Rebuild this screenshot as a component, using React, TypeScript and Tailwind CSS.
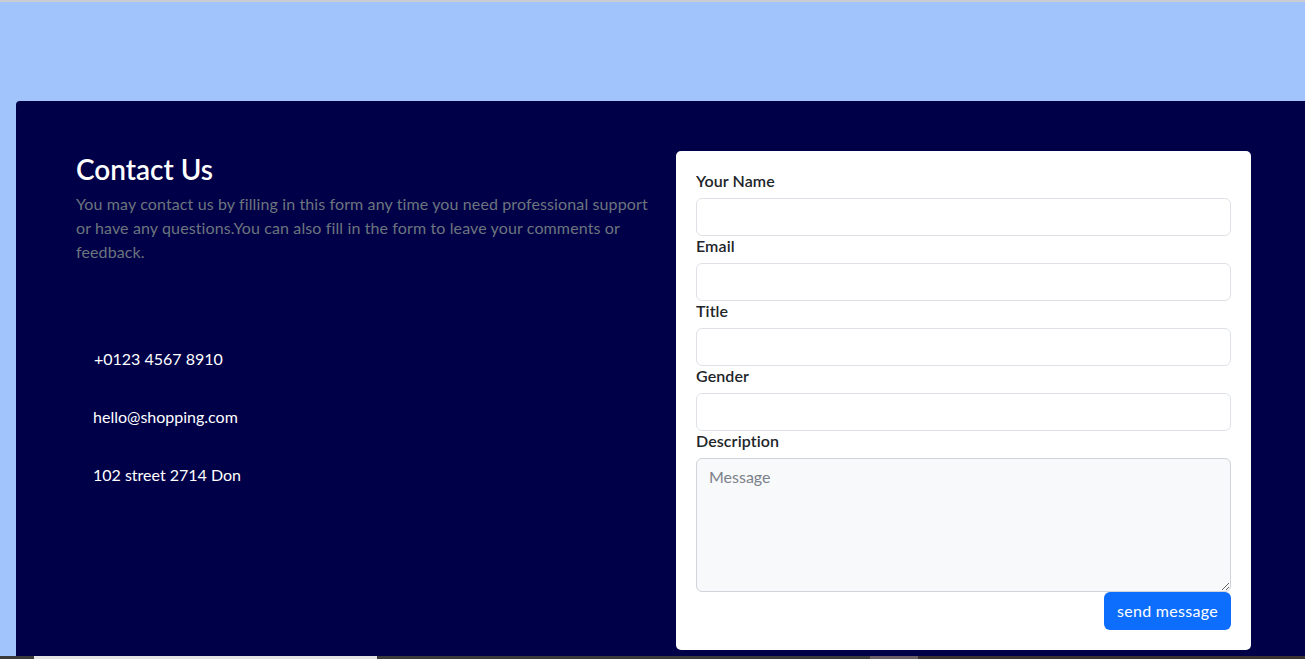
import React from "react";

export default function App() {
  const font = { fontFamily: '"Lato", "Noto Sans", sans-serif' };
  return (
    <div className="w-full h-[659px] overflow-hidden flex flex-col bg-[#a0c4fb]" style={font}>
      <div className="h-[2px] bg-[#c9cdd3] shrink-0" />
      <div className="h-[99px] shrink-0" />
      <div className="ml-[16px] w-[1320px] h-[555px] shrink-0 bg-[#000048] rounded-tl-[4px] flex pl-[60px] pt-[50px] gap-[20px]">
        <div className="w-[580px] flex flex-col">
          <h3 className="text-[28px] font-semibold text-white leading-[34px] mt-[1px]">Contact Us</h3>
          <p className="text-[#6c757d] text-[16px] leading-[24px] mt-[6px] tracking-[0.12px]">
            You may contact us by filling in this form any time you need professional support or have any questions.You can also fill in the form to leave your comments or feedback.
          </p>
          <div className="mt-[83px] flex flex-col gap-[34px] text-white text-[16px] leading-[24px]">
            <div className="pl-[18px]">+0123 4567 8910</div>
            <div className="pl-[17px]">hello@shopping.com</div>
            <div className="pl-[17px]">102 street 2714 Don</div>
          </div>
        </div>
        <div className="w-[575px] h-[499px] bg-white rounded-[5px] p-[20px] flex flex-col">
          {["Your Name", "Email", "Title", "Gender"].map((l) => (
            <div key={l} className="flex flex-col">
              <label className="text-[#212529] text-[16px] font-semibold leading-[20px] mb-[7px] tracking-[0.1px]">{l}</label>
              <input className="h-[38px] border border-[#dee2e6] rounded-[6px] bg-white px-[12px] outline-none" />
            </div>
          ))}
          <label className="text-[#212529] text-[16px] font-semibold leading-[20px] mb-[7px] tracking-[0.1px]">Description</label>
          <textarea
            placeholder="Message"
            className="h-[134px] border border-[#ced4da] rounded-[6px] bg-[#f8f9fa] px-[12px] py-[6px] text-[16px] leading-[24px] placeholder:text-[#7b8189] outline-none"
          />
          <div className="flex justify-end">
            <button className="h-[38px] px-[13px] bg-[#0d6efd] text-white text-[16px] rounded-[6px] tracking-[0.3px]">send message</button>
          </div>
        </div>
      </div>
      <div className="h-[3px] shrink-0 flex">
        <div className="w-[34px] bg-[#3a3a3a]" />
        <div className="w-[343px] bg-[#e3e3e3]" />
        <div className="w-[493px] bg-[#3b3b3b]" />
        <div className="w-[48px] bg-[#6b5f66]" />
        <div className="flex-1 bg-[#3a3233]" />
      </div>
    </div>
  );
}
